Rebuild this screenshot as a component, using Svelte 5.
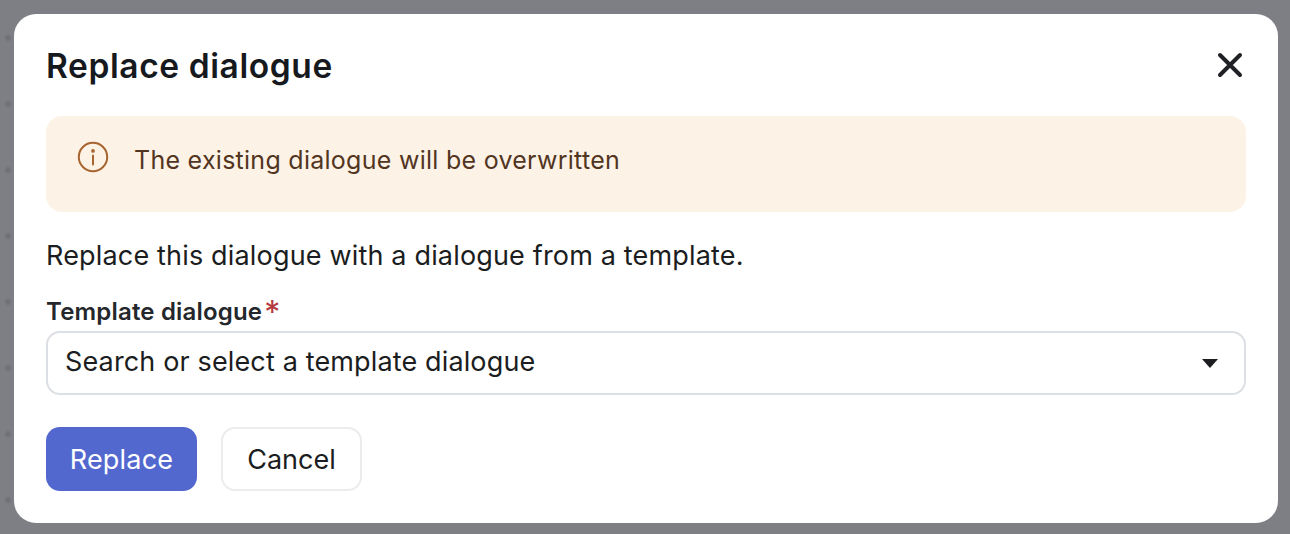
<script lang="ts">
	const title = 'Replace dialogue';
</script>

<div class="backdrop">
	<div class="dialog" role="dialog" aria-label={title}>
		<header class="dialog__head">
			<h2>{title}</h2>
			<button class="dialog__close" aria-label="Close">
				<svg width="32" height="32" viewBox="0 0 32 32" fill="none">
					<path d="M6 6 L26 26 M26 6 L6 26" stroke="#1f2124" stroke-width="4" stroke-linecap="round" />
				</svg>
			</button>
		</header>

		<div class="callout">
			<svg width="32" height="32" viewBox="0 0 32 32" fill="none">
				<circle cx="16" cy="16" r="14.2" stroke="#a8642f" stroke-width="2" />
				<circle cx="16" cy="9.9" r="1.9" fill="#a8642f" />
				<path d="M16 14.5 V23.5" stroke="#a8642f" stroke-width="2" stroke-linecap="round" />
			</svg>
			<span>The existing dialogue will be overwritten</span>
		</div>

		<p class="intro">Replace this dialogue with a dialogue from a template.</p>

		<label class="field-label" for="template">Template dialogue<span class="required">*</span></label>
		<div class="select" id="template">
			<span class="select__value">Search or select a template dialogue</span>
			<svg width="16" height="9" viewBox="0 0 16 9"><path d="M0 0 H16 L8 9 Z" fill="#1b1d20" /></svg>
		</div>

		<div class="actions">
			<button class="btn btn--primary">Replace</button>
			<button class="btn btn--ghost">Cancel</button>
		</div>
	</div>
</div>

<style>
	:global(body) {
		margin: 0;
	}

	.backdrop {
		box-sizing: border-box;
		width: 1290px;
		height: 534px;
		padding: 14px 12px 11px 14px;
		background-color: #7e7e85;
		background-image: radial-gradient(circle at 8px 38px, #717178 0, #717178 2px, rgba(113, 113, 120, 0) 4px);
		background-size: 100% 66px;
		font-family: Inter, 'Liberation Sans', sans-serif;
		color: #1b1d20;
	}

	.dialog {
		box-sizing: border-box;
		height: 509px;
		padding: 28px 32px 32px 32px;
		background: #ffffff;
		border-radius: 22px;
		display: flex;
		flex-direction: column;
	}

	.dialog__head {
		display: flex;
		align-items: center;
		justify-content: space-between;
		height: 48px;
	}

	h2 {
		margin: 0;
		font-size: 33.5px;
		font-weight: 600;
		line-height: 48px;
		letter-spacing: 0.6px;
		color: #16191d;
	}

	.dialog__close {
		display: flex;
		padding: 0;
		margin-top: -2px;
		border: none;
		background: none;
	}

	.callout {
		display: flex;
		align-items: flex-start;
		gap: 25px;
		height: 96px;
		margin-top: 26px;
		padding: 25px 31px 0;
		box-sizing: border-box;
		background: #fdf2e6;
		border-radius: 16px;
		font-size: 25px;
		line-height: 38px;
		letter-spacing: 0.27px;
		color: #52351f;
	}

	.intro {
		margin: 26px 0 0;
		font-size: 27px;
		line-height: 36px;
		letter-spacing: 0.17px;
	}

	.field-label {
		display: block;
		margin-top: 20px;
		margin-bottom: 1px;
		font-size: 24px;
		font-weight: 600;
		line-height: 36px;
		letter-spacing: 0.18px;
		color: #24272b;
	}

	.required {
		margin-left: 2px;
		font-size: 32px;
		font-weight: 400;
		line-height: 0;
		vertical-align: -4px;
		color: #b5393c;
	}

	.select {
		display: flex;
		align-items: center;
		justify-content: space-between;
		box-sizing: border-box;
		height: 64px;
		padding: 0 26px 0 17px;
		border: 2px solid #dcdfe3;
		border-radius: 14px;
		font-size: 27px;
		letter-spacing: 0.14px;
	}

	.select__value {
		margin-bottom: 4px;
	}

	.actions {
		display: flex;
		gap: 24px;
		margin-top: 32px;
	}

	.btn {
		box-sizing: border-box;
		height: 64px;
		border-radius: 14px;
		font-family: inherit;
		font-size: 27px;
	}

	.btn--primary {
		width: 151px;
		border: none;
		background: #5368cf;
		color: #ffffff;
		letter-spacing: 0.2px;
	}

	.btn--ghost {
		width: 141px;
		border: 2px solid #ebecee;
		background: #ffffff;
		color: #1b1d20;
	}
</style>
